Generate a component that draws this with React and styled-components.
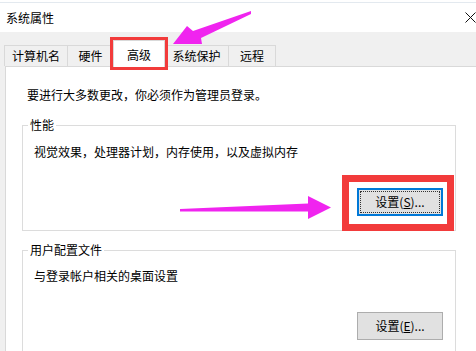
import React from 'react';
import styled, { createGlobalStyle } from 'styled-components';

const Global = createGlobalStyle`
  html, body { margin: 0; padding: 0; background: #fff; }
  body {
    font-family: "Noto Sans CJK SC", "Microsoft YaHei", sans-serif;
    font-size: 12px;
    color: #000;
  }
`;

const Window = styled.div`
  position: relative;
  width: 476px;
  height: 351px;
  overflow: hidden;
  background: #fff;
  display: flex;
  flex-direction: column;
`;

const TitleBar = styled.div`
  flex-shrink: 0;
  margin-top: 2px;
  height: 30px;
  box-sizing: border-box;
  border-top: 1px solid #e3e9ef;
  background: #fff;
  display: flex;
  align-items: center;
  justify-content: space-between;
  padding-left: 6px;
`;

const Title = styled.span`
  line-height: 16px;
`;

const CloseIcon = styled.svg`
  width: 11px;
  height: 11px;
  margin-top: -1px;
`;

const Body = styled.div`
  flex: 1 0 auto;
  background: #f0f0f0;
  padding: 13px 0 0 4px;
  display: flex;
  flex-direction: column;
`;

const TabRow = styled.div`
  flex-shrink: 0;
  display: flex;
  align-items: flex-end;
  height: 21px;
`;

const Tab = styled.div`
  flex-shrink: 0;
  box-sizing: border-box;
  width: ${(p) => p.$w}px;
  height: ${(p) => (p.$active ? 27 : 21)}px;
  margin-left: -1px;
  &:first-child { margin-left: 0; }
  border: 1px solid #d9d9d9;
  border-bottom: none;
  background: ${(p) => (p.$active ? '#fff' : '#f0f0f0')};
  display: flex;
  align-items: center;
  justify-content: center;
  line-height: 16px;
  padding-top: ${(p) => (p.$active ? 1 : 0)}px;
  position: relative;
  z-index: ${(p) => (p.$active ? 2 : 1)};
  margin-bottom: ${(p) => (p.$active ? -1 : 0)}px;
  outline: ${(p) => (p.$marked ? '3px solid #f23b3b' : 'none')};
`;

const Panel = styled.div`
  flex: 1 0 auto;
  margin-left: 1px;
  background: #fff;
  border: 1px solid #d9d9d9;
  border-right: none;
  border-bottom: none;
  padding: 20px 0 0 16px;
`;

const Intro = styled.p`
  margin: 0 0 14px 5px;
  line-height: 16px;
`;

const GroupBox = styled.fieldset`
  box-sizing: border-box;
  width: 434px;
  min-width: 0;
  margin: 0 0 11px 0;
  border: 1px solid #dcdcdc;
  padding: 0 12px 14px 11px;
`;

const Legend = styled.legend`
  padding: 0 2px;
  margin-left: -6px;
  line-height: 16px;
`;

const Desc = styled.div`
  margin-top: ${(p) => p.$top}px;
  line-height: 16px;
`;

const ButtonRow = styled.div`
  display: flex;
  justify-content: flex-end;
  margin-top: 28px;
`;

const Button = styled.button`
  position: relative;
  flex-shrink: 0;
  box-sizing: border-box;
  width: 86px;
  height: 28px;
  background: #e1e1e1;
  border: 1px solid ${(p) => (p.$focused ? '#0078d7' : '#adadad')};
  box-shadow: ${(p) => (p.$focused ? 'inset 0 0 0 1px #0078d7' : 'none')};
  font-family: inherit;
  font-size: 12px;
  color: #000;
  padding: 0;
  line-height: 16px;
  &::after {
    content: '';
    display: ${(p) => (p.$focused ? 'block' : 'none')};
    position: absolute;
    inset: 2px;
    border: 1px dotted #333;
  }
`;

const Callout = styled.div`
  position: absolute;
  left: 342px;
  top: 175px;
  width: 112px;
  height: 56px;
  box-sizing: border-box;
  border: 7px solid #f23b3b;
  pointer-events: none;
`;

const Arrows = styled.svg`
  position: absolute;
  left: 0;
  top: 0;
  width: 476px;
  height: 351px;
  pointer-events: none;
`;

const tabs = [
  { label: '计算机名', w: 64 },
  { label: '硬件', w: 47 },
  { label: '高级', w: 52, active: true },
  { label: '系统保护', w: 65 },
  { label: '远程', w: 48 },
];

export default function App() {
  return (
    <>
      <Global />
      <Window>
        <TitleBar>
          <Title>系统属性</Title>
          <CloseIcon viewBox="0 0 11 11">
            <path d="M0.5 0.5 L10.5 10.5 M10.5 0.5 L0.5 10.5" stroke="#111" strokeWidth="1" fill="none" />
          </CloseIcon>
        </TitleBar>
        <Body>
          <TabRow>
            {tabs.map((t) => (
              <Tab key={t.label} $w={t.w} $active={t.active} $marked={t.active}>
                {t.label}
              </Tab>
            ))}
          </TabRow>
          <Panel>
            <Intro>要进行大多数更改，你必须作为管理员登录。</Intro>
            <GroupBox>
              <Legend>性能</Legend>
              <Desc $top={11}>视觉效果，处理器计划，内存使用，以及虚拟内存</Desc>
              <ButtonRow>
                <Button $focused>设置(<u>S</u>)...</Button>
              </ButtonRow>
            </GroupBox>
            <GroupBox>
              <Legend>用户配置文件</Legend>
              <Desc $top={10}>与登录帐户相关的桌面设置</Desc>
              <ButtonRow>
                <Button>设置(<u>E</u>)...</Button>
              </ButtonRow>
            </GroupBox>
          </Panel>
        </Body>
        <Callout />
        <Arrows viewBox="0 0 476 351">
          <polygon
            points="173,44 187,26 193,31 251,11 251,14 201,38 202,44"
            fill="#f024ef"
          />
          <polygon
            points="180,209 308,203.5 308,196 331,207.5 308,219 308,211.5 180,211.5"
            fill="#f024ef"
          />
        </Arrows>
      </Window>
    </>
  );
}
